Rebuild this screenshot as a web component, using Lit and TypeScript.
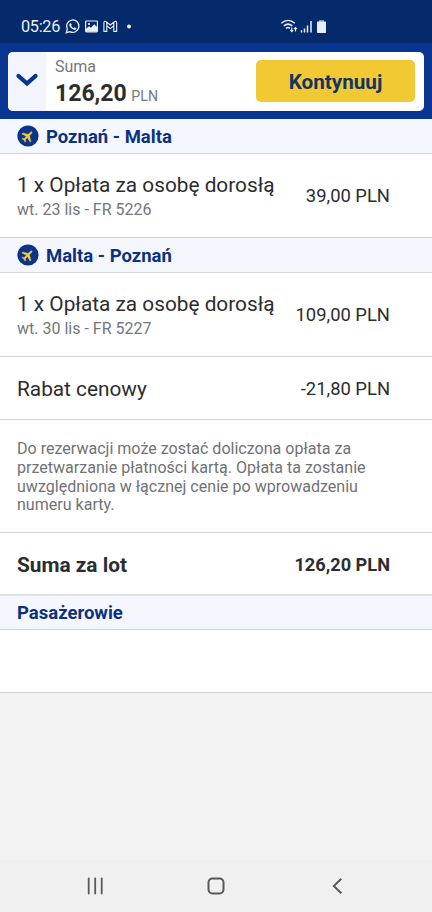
import { LitElement, html, css } from "lit";
import { customElement, property } from "lit/decorators.js";

const planeIcon = html`<svg class="plane" viewBox="0 0 22 22" width="22" height="22">
  <circle cx="11" cy="11" r="10.6" fill="#0a348c" />
  <path
    transform="translate(10.7 11.2) rotate(45) scale(.62) translate(-12 -12)"
    d="M21.5 16.2v-2.1l-8-4.9V4c0-1-.7-1.8-1.5-1.8S10.500 3 10.500 4v5.200l-8 4.900v2.100l8-2.400v4.700l-2.300 1.700v1.700L12 20.900l3.800 1v-1.700l-2.300-1.700v-4.700z"
    fill="#efcb3c" stroke="#efcb3c" stroke-width=".5"
  />
</svg>`;

@customElement("status-bar")
class StatusBar extends LitElement {
  static styles = css`
    :host {
      display: flex;
      height: 43px;
      box-sizing: border-box;
      padding: 11px 0 0 21px;
      background: #052a6c;
      color: #e9effa;
    }
    .time {
      width: 44px;
      font-size: 16.3px;
      line-height: 32px;
      height: 32px;
      letter-spacing: -0.3px;
    }
    svg {
      display: block;
    }
  `;
  render() {
    return html`
      <span class="time">05:26</span>
      <svg width="70" height="32" viewBox="65 11 70 32" fill="none" stroke="#e9effa">
        <path d="M66.300 32.700l1-3.600a6.200 6.200 0 1 1 2.500 2.500z" stroke-width="1.300" />
        <path d="M69.900 23.600c.7-.7 1.200-.4 1.500.4l.3.800-.6 1c.7 1.200 1.500 1.900 2.700 2.300l.8-.8 1.800.9c-.2 1.600-1.600 1.900-3 1.300-2-.8-3.600-2.400-4.100-4.100-.1-.7 0-1.300.6-1.800z" fill="#e9effa" stroke="none" />
        <rect x="85.600" y="21" width="11.800" height="10.900" rx=".8" stroke-width="1.200" />
        <path d="M86 31.500v-2.700l3-2.500 2 1.500 3.200-3.600 3.200 3.100v4.200z" fill="#e9effa" stroke="none" />
        <circle cx="89" cy="24" r="1.100" fill="#e9effa" stroke="none" />
        <path d="M103.900 31.400v-8.600c0-1.600 1.400-1.900 2.300-1.100l4.100 3.300 4.100-3.300c.9-.8 2.300-.5 2.300 1.100v8.600h-2.900v-5.600l-3.500 2.800-3.500-2.800v5.600zM106.800 22.400v3.300M113.800 22.400v3.300" stroke-width="1.100" stroke-linejoin="round" />
        <circle cx="129" cy="26.500" r="2" fill="#e9effa" stroke="none" />
      </svg>
      <svg width="200" height="32" viewBox="135 11 200 32" fill="none" stroke="#e9effa">
        <path d="M281.300 23.200c4.100-3.700 9.400-3.700 13.500 0M283.700 26c2.700-2.300 6-2.300 8.700 0M286 28.400c1.300-1.100 2.800-1.100 4 0" stroke-width="1.500" />
        <path d="M291.800 27.500v4M290.300 30l1.500 1.700 1.500-1.700M295.500 31.500v-4M294 29.200l1.500-1.700 1.500 1.700" stroke-width="1.100" />
        <path d="M301.500 32.500v-2.200M304.500 32.500v-4M307.500 32.500v-7M311 32.500v-11.500" stroke-width="1.500" />
        <rect x="319" y="20" width="5" height="2" fill="#8194bb" stroke="none" />
        <rect x="317" y="21.500" width="9" height="11.500" rx=".8" fill="#e9effa" stroke="none" />
      </svg>
    `;
  }
}

@customElement("section-heading")
class SectionHeading extends LitElement {
  @property() label = "";
  @property({ type: Boolean }) flight = false;
  static styles = css`
    :host {
      display: flex;
      align-items: center;
      height: 35px;
      box-sizing: border-box;
      padding: 1px 0 0 17px;
      border-bottom: 1px solid #d3d5d9;
      background: #f4f7fe;
      color: #0b3180;
      font-size: 18.500px;
      font-weight: 700;
    }
    .plane {
      margin: -2px 7.500px 0 -0.500px;
      flex: none;
    }
  `;
  render() {
    return html`${this.flight ? planeIcon : ""}<span>${this.label}</span>`;
  }
}

@customElement("price-row")
class PriceRow extends LitElement {
  @property() label = "";
  @property() detail = "";
  @property() price = "";
  @property({ type: Boolean, reflect: true }) total = false;
  static styles = css`
    :host {
      display: flex;
      align-items: center;
      justify-content: space-between;
      height: 63px;
      box-sizing: border-box;
      padding: 1px 42px 0 17px;
      border-bottom: 1px solid #d0d1d3;
      background: #fff;
      color: #2c2d2f;
    }
    :host([detail]) {
      height: 84px;
    }
    :host([total]) {
      font-weight: 700;
    }
    .label {
      font-size: 20.800px;
      line-height: 26px;
    }
    .detail {
      font-size: 16px;
      line-height: 24px;
      color: #73767b;
    }
    :host([detail]) .label {
      padding-top: 1px;
    }
    .price {
      font-size: 18.400px;
      white-space: nowrap;
    }
    :host([detail]) .price {
      padding-bottom: 2px;
    }
    :host([total]) .price {
      font-size: 18.200px;
    }
  `;
  render() {
    return html`
      <div>
        <div class="label">${this.label}</div>
        ${this.detail ? html`<div class="detail">${this.detail}</div>` : ""}
      </div>
      <div class="price">${this.price}</div>
    `;
  }
}

@customElement("app-root")
class AppRoot extends LitElement {
  static styles = css`
    :host {
      display: flex;
      flex-direction: column;
      height: 912px;
      overflow: hidden;
      background: #f3f3f3;
      font-family: Roboto, "Noto Sans", sans-serif;
    }
    .header {
      height: 76px;
      box-sizing: border-box;
      padding: 9px 8px 8px;
      background: #073590;
    }
    .card {
      display: flex;
      align-items: center;
      height: 58.500px;
      border-radius: 5px;
      overflow: hidden;
      background: #fff;
    }
    .toggle {
      display: flex;
      align-items: center;
      justify-content: center;
      align-self: stretch;
      width: 38px;
      padding-bottom: 2px;
      box-sizing: border-box;
      background: #f2f6fc;
    }
    .sum {
      flex: 1;
      padding: 7px 0 0 9px;
    }
    .caption {
      font-size: 16px;
      line-height: 20px;
      color: #74777b;
    }
    .amount {
      font-size: 23px;
      line-height: 33px;
      font-weight: 700;
      color: #2c2d2f;
    }
    .currency {
      font-size: 14.200px;
      font-weight: 400;
      color: #74777b;
      margin-left: -1px;
    }
    .next {
      width: 159px;
      height: 42px;
      margin: 0 9px 1px 0;
      padding: 2px 0 0;
      border: 0;
      border-radius: 5px;
      background: #f0c933;
      color: #153466;
      font: 700 20.700px Roboto, sans-serif;
    }
    .notice {
      height: 113px;
      box-sizing: border-box;
      padding: 20px 50px 0 17px;
      border-bottom: 1px solid #d0d1d3;
      background: #fff;
      color: #707276;
      font-size: 16.060px;
      line-height: 18.800px;
      white-space: nowrap;
    }
    .flight-total {
      height: 62px;
      padding-top: 2px;
      border-bottom-color: #dcdee3;
    }
    .passengers {
      padding-top: 2px;
      box-shadow: inset 0 1px #dfe2e7;
    }
    .empty {
      height: 63px;
      box-sizing: border-box;
      border-bottom: 1px solid #d0d1d3;
      background: #fff;
    }
    .nav {
      display: flex;
      height: 52px;
      margin-top: auto;
      background: #f0f0f0;
    }
  `;
  render() {
    return html`
      <status-bar></status-bar>
      <div class="header">
        <div class="card">
          <div class="toggle">
            <svg width="24" height="16" viewBox="0 0 24 16" fill="none">
              <path d="M3.500 4l8.500 7.500L20.500 4" stroke="#073590" stroke-width="4.300" stroke-linecap="round" />
            </svg>
          </div>
          <div class="sum">
            <div class="caption">Suma</div>
            <div class="amount">126,20 <span class="currency">PLN</span></div>
          </div>
          <button class="next">Kontynuuj</button>
        </div>
      </div>
      <section-heading flight label="Poznań - Malta"></section-heading>
      <price-row label="1 x Opłata za osobę dorosłą" detail="wt. 23 lis - FR 5226" price="39,00 PLN"></price-row>
      <section-heading flight label="Malta - Poznań"></section-heading>
      <price-row label="1 x Opłata za osobę dorosłą" detail="wt. 30 lis - FR 5227" price="109,00 PLN"></price-row>
      <price-row label="Rabat cenowy" price="-21,80 PLN"></price-row>
      <div class="notice">
        Do rezerwacji może zostać doliczona opłata za<br />
        przetwarzanie płatności kartą. Opłata ta zostanie<br />
        uwzględniona w łącznej cenie po wprowadzeniu<br />
        numeru karty.
      </div>
      <price-row class="flight-total" total label="Suma za lot" price="126,20 PLN"></price-row>
      <section-heading class="passengers" label="Pasażerowie"></section-heading>
      <div class="empty"></div>
      <div class="nav">
        <svg width="432" height="52" viewBox="0 0 432 52" fill="none" stroke="#58595b" stroke-width="2">
          <path d="M88.700 18.500v15M95.200 18.500v15M101.700 18.500v15" stroke-linecap="round" stroke-width="1.800" />
          <rect x="208.500" y="18.500" width="15" height="15" rx="4" />
          <path d="M341.300 18.800l-7.500 7.200 7.500 7.300" />
        </svg>
      </div>
    `;
  }
}
